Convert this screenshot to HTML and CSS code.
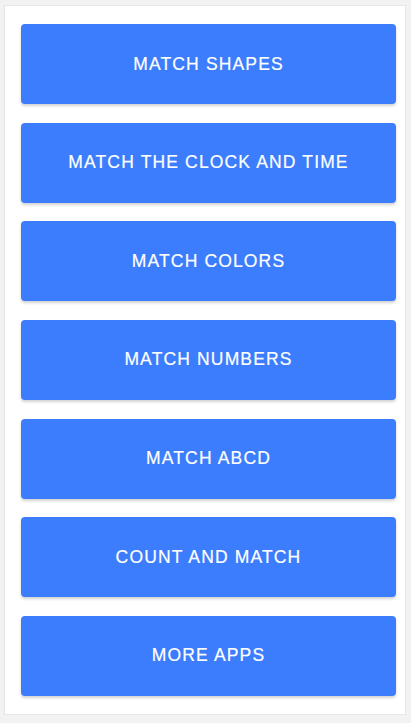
FILE: index.html
```html
<!DOCTYPE html>
<html lang="en">
<head>
  <meta charset="UTF-8">
  <title>Match Games</title>
  <meta name="viewport" content="width=device-width, initial-scale=1.0">
  <link rel="stylesheet" href="styles.css">
</head>
<body>
  <div class="card">
    <button class="button">MATCH SHAPES</button>
    <button class="button">MATCH THE CLOCK AND TIME</button>
    <button class="button">MATCH COLORS</button>
    <button class="button">MATCH NUMBERS</button>
    <button class="button">MATCH ABCD</button>
    <button class="button">COUNT AND MATCH</button>
    <button class="button">MORE APPS</button>
  </div>
</body>
</html>
```

FILE: styles.css
```css
html, body {
  margin: 0;
  padding: 0;
  background: #f2f2f2;
  height: 100%;
  overflow: hidden;
}

.card {
  box-sizing: border-box;
  margin: 5px 5px 0 4px;
  height: 710px;
  background: white;
  border: 1px solid #e6e6e6;
  padding: 18px 9px 0 16px;
  display: flex;
  flex-direction: column;
  gap: 18.67px;
}

.button {
  height: 80px;
  flex: none;
  background: #3b7dfd;
  color: white;
  border: none;
  border-radius: 4px;
  box-shadow: 0 2px 3px rgba(0, 0, 0, 0.18);
  font-family: "Liberation Sans", Arial, sans-serif;
  font-size: 17.5px;
  letter-spacing: 1.15px;
  -webkit-text-stroke: 0.2px white;
  cursor: pointer;
}
```
